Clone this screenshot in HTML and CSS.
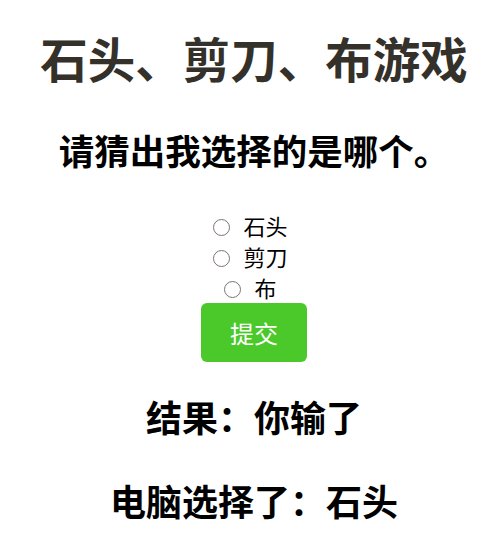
FILE: index.html
```html
<!DOCTYPE html>
<html lang="zh">
<head>
<meta charset="utf-8">
<title>石头、剪刀、布游戏</title>
<link rel="stylesheet" href="styles.css">
</head>
<body>
<main class="game">
  <h1 class="title">石头、剪刀、布游戏</h1>
  <h2 class="prompt">请猜出我选择的是哪个。</h2>
  <form class="choices">
    <label class="choice"><input type="radio" name="pick" value="rock"> 石头</label>
    <label class="choice"><input type="radio" name="pick" value="scissors"> 剪刀</label>
    <label class="choice"><input type="radio" name="pick" value="paper"> 布</label>
    <button type="button" class="submit">提交</button>
  </form>
  <h2 class="outcome">结果：你输了</h2>
  <h2 class="outcome">电脑选择了：石头</h2>
</main>
</body>
</html>
```
FILE: styles.css
```css
body {
  margin: 8px;
  background: #fff;
  font-family: "Noto Sans CJK SC", "Noto Sans", sans-serif;
  color: #000;
}

.game {
  text-align: center;
}

.title,
.prompt,
.outcome {
  padding-left: 8px;
}

.title {
  margin: 20px 0 0;
  font-size: 47.5px;
  line-height: 60px;
  font-weight: 700;
  color: #34302a;
}

.prompt {
  margin: 39px 0 0;
  font-size: 35.5px;
  line-height: 46px;
  font-weight: 700;
}

.choices {
  margin-top: 37px;
  display: flex;
  flex-direction: column;
  align-items: center;
}

.choice {
  display: block;
  font-size: 22px;
  line-height: 31px;
}

/* plain outlined radio circle */
.choice input {
  appearance: none;
  -webkit-appearance: none;
  box-sizing: border-box;
  margin: 0 9px 0 0;
  width: 17px;
  height: 17px;
  border: 1.5px solid #7d7470;
  border-radius: 50%;
  background: #fff;
  vertical-align: -1px;
}

.submit {
  margin: 0 0 0 8px;
  width: 106px;
  height: 59px;
  border: none;
  border-radius: 6px;
  background: #4cc92a;
  color: #fff;
  font-family: inherit;
  font-size: 24px;
}

.outcome {
  margin: 31px 0 0;
  font-size: 36px;
  line-height: 46px;
  font-weight: 700;
}

.outcome + .outcome {
  margin-top: 38px;
}
```
